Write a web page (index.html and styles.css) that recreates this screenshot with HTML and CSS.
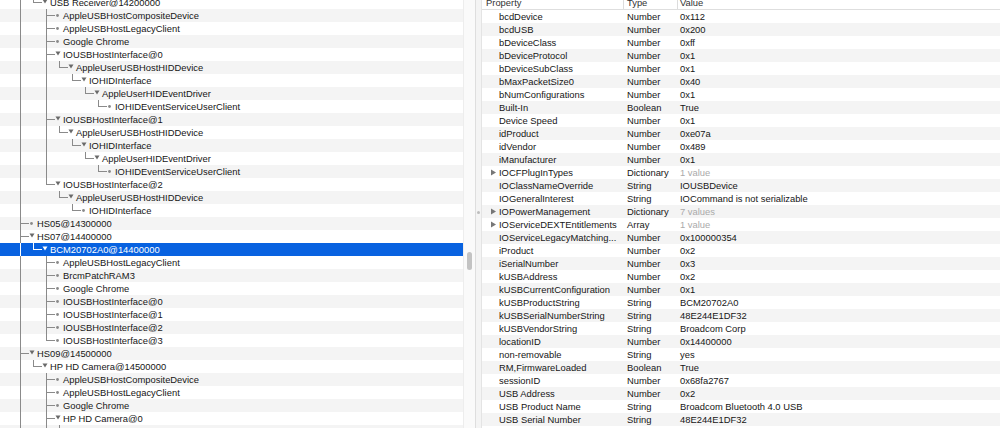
FILE: index.html
```html
<!DOCTYPE html>
<html>
<head>
  <meta charset="utf-8">
  <title>IORegistryExplorer</title>
  <link rel="stylesheet" href="styles.css">
</head>
<body>
<div class="window">
  <div class="tree">
    <div class="tree-rows" id="tree"></div>
  </div>
  <div class="scroller"><div class="thumb"></div></div>
  <div class="divider"><div class="grip"></div></div>
  <div class="props">
    <div class="prow head">
      <div class="c-name">Property</div>
      <div class="c-type">Type</div>
      <div class="c-value">Value</div>
    </div>
    <div id="props"></div>
  </div>
</div>

<script>
// level, name, expanded?, selected?
const nodes = [
  [2, "USB Receiver@14200000", 1],
  [3, "AppleUSBHostCompositeDevice"],
  [3, "AppleUSBHostLegacyClient"],
  [3, "Google Chrome"],
  [3, "IOUSBHostInterface@0", 1],
  [4, "AppleUserUSBHostHIDDevice", 1],
  [5, "IOHIDInterface", 1],
  [6, "AppleUserHIDEventDriver", 1],
  [7, "IOHIDEventServiceUserClient"],
  [3, "IOUSBHostInterface@1", 1],
  [4, "AppleUserUSBHostHIDDevice", 1],
  [5, "IOHIDInterface", 1],
  [6, "AppleUserHIDEventDriver", 1],
  [7, "IOHIDEventServiceUserClient"],
  [3, "IOUSBHostInterface@2", 1],
  [4, "AppleUserUSBHostHIDDevice", 1],
  [5, "IOHIDInterface"],
  [1, "HS05@14300000"],
  [1, "HS07@14400000", 1],
  [2, "BCM20702A0@14400000", 1, 1],
  [3, "AppleUSBHostLegacyClient"],
  [3, "BrcmPatchRAM3"],
  [3, "Google Chrome"],
  [3, "IOUSBHostInterface@0"],
  [3, "IOUSBHostInterface@1"],
  [3, "IOUSBHostInterface@2"],
  [3, "IOUSBHostInterface@3"],
  [1, "HS09@14500000", 1],
  [2, "HP HD Camera@14500000", 1],
  [3, "AppleUSBHostCompositeDevice"],
  [3, "AppleUSBHostLegacyClient"],
  [3, "Google Chrome"],
  [3, "HP HD Camera@0", 1],
  [4, "AppleUSBVideoSupport"],
  [3, "HP HD Camera@1"],
  [1, "HS10@14600000"]
];

// does the branch at level k still go on below row r?
function cont(r, k) {
  for (let j = r + 1; j < nodes.length; j++) {
    if (nodes[j][0] < k) return false;
    if (nodes[j][0] == k) return true;
  }
  return false;
}

function guides(r) {
  const [lvl, , open] = nodes[r];
  const w = 24 + 13 * lvl;
  let s = "";
  for (let k = 1; k <= lvl; k++) {
    const x = 7 + 13 * k + 0.5;
    const more = cont(r, k);
    if (k < lvl && more) s += `<line x1="${x}" y1="0" x2="${x}" y2="13"/>`;
    if (k == lvl) s += `<line x1="${x}" y1="0" x2="${x}" y2="${more ? 13 : 7}"/>`;
  }
  const x0 = 7 + 13 * lvl;
  s += `<line x1="${x0}" y1="6.5" x2="${x0 + 9}" y2="6.5"/>`;
  if (open) s += `<polygon class="tri" points="${x0 + 9.5},3.5 ${x0 + 14.5},3.5 ${x0 + 12},7.5"/>`;
  else s += `<circle class="dot" cx="${x0 + 11.5}" cy="6.5" r="1.4"/>`;
  return `<svg width="${w}" height="13" viewBox="0 0 ${w} 13">${s}</svg>`;
}

const tree = document.getElementById("tree");
tree.innerHTML = nodes.map((n, i) =>
  `<div class="node${n[3] ? " selected" : ""}">${guides(i)}<span>${n[1]}</span></div>`
).join("");

// property, type, value, has children?
const props = [
  ["bcdDevice", "Number", "0x112"],
  ["bcdUSB", "Number", "0x200"],
  ["bDeviceClass", "Number", "0xff"],
  ["bDeviceProtocol", "Number", "0x1"],
  ["bDeviceSubClass", "Number", "0x1"],
  ["bMaxPacketSize0", "Number", "0x40"],
  ["bNumConfigurations", "Number", "0x1"],
  ["Built-In", "Boolean", "True"],
  ["Device Speed", "Number", "0x1"],
  ["idProduct", "Number", "0xe07a"],
  ["idVendor", "Number", "0x489"],
  ["iManufacturer", "Number", "0x1"],
  ["IOCFPlugInTypes", "Dictionary", "1 value", 1],
  ["IOClassNameOverride", "String", "IOUSBDevice"],
  ["IOGeneralInterest", "String", "IOCommand is not serializable"],
  ["IOPowerManagement", "Dictionary", "7 values", 1],
  ["IOServiceDEXTEntitlements", "Array", "1 value", 1],
  ["IOServiceLegacyMatching...", "Number", "0x100000354"],
  ["iProduct", "Number", "0x2"],
  ["iSerialNumber", "Number", "0x3"],
  ["kUSBAddress", "Number", "0x2"],
  ["kUSBCurrentConfiguration", "Number", "0x1"],
  ["kUSBProductString", "String", "BCM20702A0"],
  ["kUSBSerialNumberString", "String", "48E244E1DF32"],
  ["kUSBVendorString", "String", "Broadcom Corp"],
  ["locationID", "Number", "0x14400000"],
  ["non-removable", "String", "yes"],
  ["RM,FirmwareLoaded", "Boolean", "True"],
  ["sessionID", "Number", "0x68fa2767"],
  ["USB Address", "Number", "0x2"],
  ["USB Product Name", "String", "Broadcom Bluetooth 4.0 USB"],
  ["USB Serial Number", "String", "48E244E1DF32"]
];

const arrow = `<svg width="17" height="13" viewBox="0 0 17 13"><polygon points="9,3.5 9,9.5 14,6.5"/></svg>`;

document.getElementById("props").innerHTML = props.map(p =>
  `<div class="prow">
    <div class="c-name"><span class="disc">${p[3] ? arrow : ""}</span><span class="label">${p[0]}</span></div>
    <div class="c-type">${p[1]}</div>
    <div class="c-value${p[3] ? " dim" : ""}">${p[2]}</div>
  </div>`
).join("");
</script>
</body>
</html>
```

FILE: styles.css
```css
html, body {
  margin: 0;
  height: 100%;
}

body {
  font-family: "Liberation Sans", Arial, sans-serif;
  font-size: 9.4px;
  color: #161616;
  background: #fff;
  overflow: hidden;
}

.window {
  display: flex;
  width: 1000px;
  height: 428px;
  overflow: hidden;
}

/* left: registry tree */
.tree {
  width: 463px;
  flex: none;
  overflow: hidden;
}

.tree-rows {
  margin-top: -4px;
}

.node {
  display: flex;
  height: 13px;
  line-height: 13px;
  white-space: nowrap;
}

.node:nth-child(even) {
  background: #f4f4f4;
}

.node svg {
  flex: none;
  stroke: #8a8a8a;
  stroke-width: 1;
  shape-rendering: crispEdges;
}

.node .dot {
  fill: #8a8a8a;
  stroke: none;
  shape-rendering: auto;
}

.node .tri {
  fill: #6a6a6a;
  stroke: none;
  shape-rendering: auto;
}

.node.selected {
  background: #0862e0;
  color: #fff;
}

.node.selected svg {
  stroke: #fff;
}

.node.selected .tri,
.node.selected .dot {
  fill: #fff;
}

/* scroll bar + split divider */
.scroller {
  width: 11px;
  flex: none;
  background: #fafafa;
  border-left: 1px solid #ededed;
}

.thumb {
  width: 5px;
  height: 18px;
  margin: 252px 0 0 3px;
  border-radius: 3px;
  background: #c3c3c3;
}

.divider {
  width: 5px;
  flex: none;
  background: #f4f4f4;
  border-left: 1px solid #dedede;
  border-right: 1px solid #e4e4e4;
}

.grip {
  width: 3px;
  height: 3px;
  margin: 211px 0 0 1px;
  border-radius: 50%;
  background: #bdbdbd;
}

/* right: property table */
.props {
  flex: 1;
  overflow: hidden;
}

.prow {
  display: grid;
  grid-template-columns: 141px 54px 1fr;
  height: 13px;
  line-height: 13px;
  white-space: nowrap;
}

#props .prow:nth-child(even) {
  background: #f4f4f4;
}

.prow.head {
  margin-top: -4px;
  border-bottom: 1px solid #dedede;
  color: #333;
}

.head .c-name {
  padding-left: 4px;
}

.head .c-type {
  border-left: 1px solid #dcdcdc;
  padding-left: 3px;
}

.head .c-value {
  border-left: 1px solid #dcdcdc;
  padding-left: 2px;
}

.c-name {
  display: flex;
  min-width: 0;
}

.disc {
  width: 17px;
  flex: none;
}

.disc svg {
  display: block;
  fill: #777;
}

.label {
  min-width: 0;
  overflow: hidden;
  text-overflow: ellipsis;
  padding-right: 4px;
}

#props .c-type {
  padding-left: 4px;
}

#props .c-value {
  padding-left: 3px;
}

.c-value.dim {
  color: #aaa;
}
```
